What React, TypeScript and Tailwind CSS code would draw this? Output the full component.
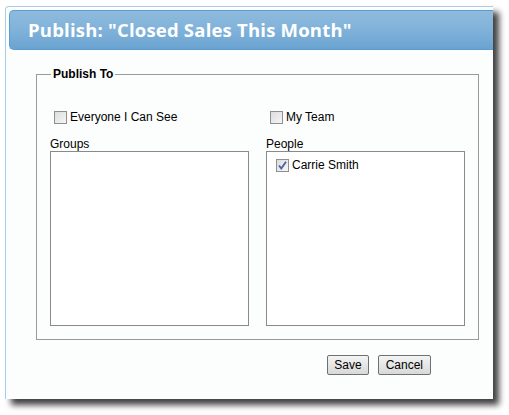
import React from "react";

function Box({ checked }: { checked?: boolean }) {
  return (
    <span className="inline-flex w-[13px] h-[13px] border border-[#8f8f8f] bg-gradient-to-br from-[#dcdcdc] to-[#f6f6f6] items-center justify-center shrink-0">
      {checked && (
        <svg width="11" height="11" viewBox="0 0 11 11">
          <path d="M2 5.5 L4.3 8.5 L9 1.8" stroke="#4a5fa8" strokeWidth="1.8" fill="none" />
        </svg>
      )}
    </span>
  );
}

export default function App() {
  return (
    <div className="w-[509px] h-[415px] bg-white relative overflow-hidden" style={{ fontFamily: '"Liberation Sans", Arial, sans-serif' }}>
      <div className="absolute left-[5px] top-[6px] w-[488px] h-[393px] bg-[#fcfdfd] border-l border-t border-[#a9cde8] rounded-tl-[4px] shadow-[6px_6px_6px_rgba(0,0,0,0.75)] flex flex-col">
        <div className="mt-[3px] ml-[3px] h-[40px] rounded-l-[5px] border border-r-0 border-[#5b9bd1] bg-gradient-to-b from-[#8fbadd] via-[#80b2da] to-[#6aa3d0] flex items-center pl-[18px]">
          <span className="text-white font-bold text-[18.5px] tracking-[0.2px]" style={{ fontFamily: '"Open Sans", sans-serif' }}>
            Publish: "Closed Sales This Month"
          </span>
        </div>
        <fieldset className="mt-[17px] ml-[30px] w-[443px] h-[273px] border border-[#9a9a9a] px-[13px] pt-0 pb-0 relative">
          <legend className="text-[12px] font-bold text-black px-[2px] ml-[1px] leading-[14px]">Publish To</legend>
          <div className="grid grid-cols-2 gap-x-[17px] mt-[29px] text-[12px] text-black">
            <label className="flex items-center gap-[3px] pl-[4px] h-[14px]">
              <Box />
              <span>Everyone I Can See</span>
            </label>
            <label className="flex items-center gap-[3px] pl-[4px] h-[14px]">
              <Box />
              <span>My Team</span>
            </label>
            <div className="mt-[13px]">
              <div className="leading-[14px]">Groups</div>
              <div className="h-[175px] border border-[#8a8a8a] bg-white"></div>
            </div>
            <div className="mt-[13px]">
              <div className="leading-[14px]">People</div>
              <div className="h-[175px] border border-[#8a8a8a] bg-white pt-[6px] pl-[9px]">
                <label className="flex items-center gap-[3px] h-[14px]">
                  <Box checked />
                  <span>Carrie Smith</span>
                </label>
              </div>
            </div>
          </div>
        </fieldset>
        <div className="flex justify-end gap-[9px] mr-[62px] mt-[15px] text-[12px]">
          <button className="h-[20px] px-[6px] border border-[#707070] rounded-[2px] bg-gradient-to-b from-[#f4f4f4] to-[#d8d8d8] text-black">Save</button>
          <button className="h-[20px] px-[7px] border border-[#707070] rounded-[2px] bg-gradient-to-b from-[#f4f4f4] to-[#d8d8d8] text-black">Cancel</button>
        </div>
      </div>
    </div>
  );
}
